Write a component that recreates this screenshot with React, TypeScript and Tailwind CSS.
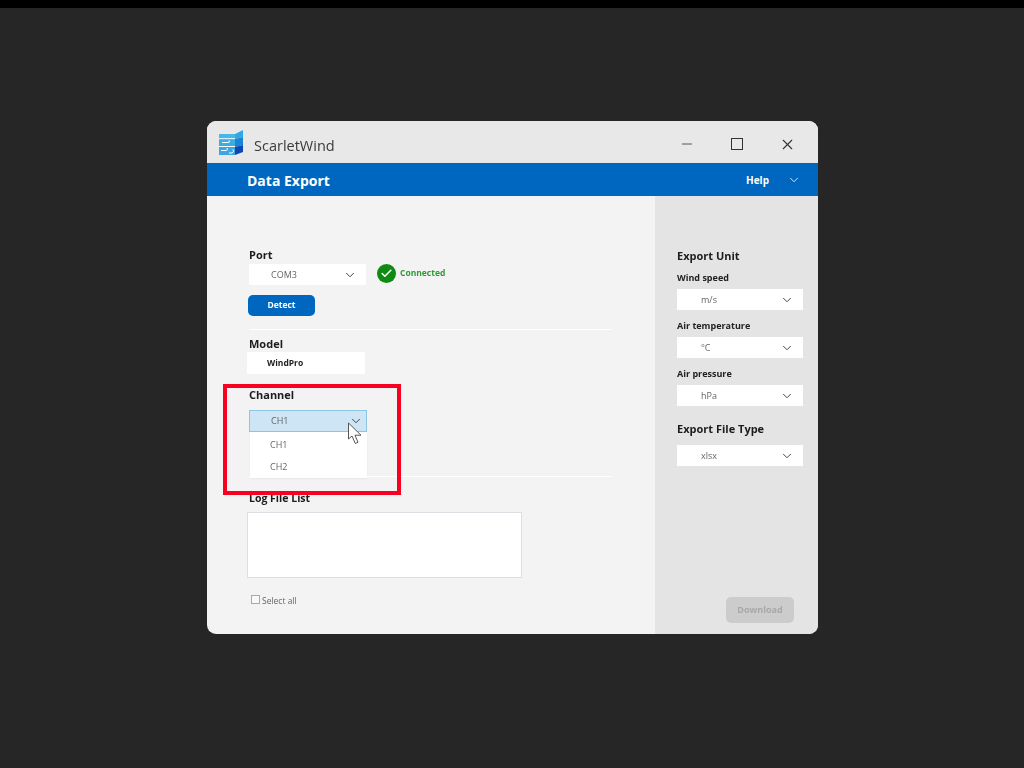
import { Check, ChevronDown, Minus, X } from 'lucide-react';

function Select({ value, className = 'w-[126px]', text = 'pl-[24px]' }: { value: string; className?: string; text?: string }) {
  return (
    <div className={`h-[21px] bg-white flex items-center justify-between pr-[9px] ${text} ${className}`}>
      <span className="text-[9px] text-[#666] pt-px">{value}</span>
      <ChevronDown className="w-[14px] h-[14px] text-[#444]" strokeWidth={1.7} />
    </div>
  );
}

function Logo() {
  return (
    <svg width="25" height="26" viewBox="0 0 25 26" className="shrink-0">
      <path d="M0 5 L16 5 L16 9.5 L0 9.5 Z" fill="#45b7ea" />
      <path d="M0 10 L16 10 L16 17 L0 17 Z" fill="#38ade6" />
      <path d="M0 18 L16 18 L16 26 L0 26 Z" fill="#3ba6e4" />
      <path d="M16 5 L24 1 L24 8 L16 10 Z" fill="#2fa8e6" />
      <path d="M16 10 L24 8 L24 16 L16 18 Z" fill="#1c84d6" />
      <path d="M16 18 L24 16 L24 23 L16 26 Z" fill="#0a48b4" />
      <path d="M3 13.5 H9 Q11.5 13.5 10 11.5 M2 21.5 H7 Q9.5 21 8 19 M10 24 H13 Q15.5 23 14 20.5" stroke="#ffffff" strokeWidth="1" fill="none" />
      <path d="M0 17.5 H16 M0 9.7 H16" stroke="#ffffff" strokeWidth="0.8" />
    </svg>
  );
}

function Cursor() {
  return (
    <svg width="16" height="23" viewBox="0 0 16 23" className="absolute left-[347px] top-[422px]">
      <path d="M1.5 1 L1.5 17 L5 14 L8.3 21.5 L11 20.3 L8 13.2 L14 13.2 Z" fill="#ffffff" stroke="#555555" strokeWidth="1" strokeLinejoin="round" />
    </svg>
  );
}

export default function App() {
  return (
    <div className="relative h-[768px] w-[1024px] overflow-hidden bg-[#262626] font-['Open_Sans','Noto_Sans',sans-serif]">
      <div className="h-2 bg-black" />
      <div className="ml-[207px] mt-[113px] w-[611px] h-[513px] rounded-[9px] overflow-hidden flex flex-col bg-[#f3f3f3] blur-[0.4px]">
        {/* title bar */}
        <div className="h-[42px] bg-[#e8e8e8] flex items-center pl-[12px]">
          <Logo />
          <span className="ml-[10px] mt-[7px] text-[14.5px] text-[#3a3a3a]">ScarletWind</span>
          <div className="ml-auto mt-[4px] flex items-center pr-[22px] text-[#333]">
            <Minus className="w-[16px] h-[16px]" strokeWidth={1.2} />
            <div className="ml-[36px] w-[12px] h-[12px] border-[1.5px] border-[#333]" />
            <X className="ml-[36px] w-[17px] h-[17px]" strokeWidth={1.5} />
          </div>
        </div>
        {/* blue header */}
        <div className="h-[33px] bg-[#0067c0] flex items-center pl-10 pr-[17px] text-white">
          <span className="mt-[2px] text-[14px] font-bold">Data Export</span>
          <span className="ml-auto mt-px text-[10px] font-bold">Help</span>
          <ChevronDown className="ml-[18px] w-[14px] h-[14px] text-[#cfe4f7]" strokeWidth={1.7} />
        </div>
        <div className="flex flex-1">
          {/* left form */}
          <div className="flex-1 pt-[51px] pl-[42px] pr-[43px]">
            <div className="text-[11px] font-bold text-[#1c1c1c] leading-[16px]">Port</div>
            <div className="flex items-center mt-px">
              <Select value="COM3" className="w-[117px]" text="pl-[22px]" />
              <div className="ml-[11px] -mt-[3px] w-[19px] h-[19px] rounded-full bg-[#0f8a12] flex items-center justify-center">
                <Check className="w-[13px] h-[13px] text-white" strokeWidth={3} />
              </div>
              <span className="ml-[4px] -mt-[3px] text-[8.5px] font-bold text-[#2f9a34]">Connected</span>
            </div>
            <div className="mt-[10px] -ml-px w-[67px] h-[21px] rounded-[5px] bg-[#0067c0] flex items-center justify-center text-[8.5px] font-bold text-white">Detect</div>
            <div className="mt-[13px] h-px bg-white" />
            <div className="mt-[6px] text-[11px] font-bold text-[#1c1c1c] leading-[16px]">Model</div>
            <div className="-ml-[2px] w-[118px] h-[22px] bg-white flex items-center pl-[20px] pt-px text-[8.5px] font-bold text-[#222]">WindPro</div>
            <div className="mt-[13px] text-[11px] font-bold text-[#1c1c1c] leading-[16px]">Channel</div>
            <div className="mt-[7px] w-[118px] h-[22px] bg-[#cde5f4] border border-[#8cc4e4] flex items-center justify-between pl-[21px] pr-[3px]">
              <span className="text-[9px] text-[#666]">CH1</span>
              <ChevronDown className="w-[14px] h-[14px] text-[#444]" strokeWidth={1.7} />
            </div>
            <div className="ml-px w-[117px] h-[46px] bg-white shadow-[0_1px_2px_rgba(0,0,0,0.05)] pt-[2px] pl-[20px] text-[9px] text-[#666]">
              <div className="h-[22px] leading-[22px]">CH1</div>
              <div className="h-[22px] leading-[22px]">CH2</div>
            </div>
            <div className="-mt-[2px] h-px bg-white" />
            <div className="mt-[13px] text-[10.5px] font-bold text-[#1c1c1c] leading-[16px]">Log File List</div>
            <div className="w-[275px] h-[66px] mt-[6px] -ml-[2px] bg-white border border-[#dcdfe3]" />
            <div className="mt-[17px] flex items-center text-[8.5px] text-[#666]">
              <div className="ml-[2px] w-[9px] h-[9px] -mt-[3px] border border-[#aaa] bg-[#f8f8f8]" />
              <span className="ml-[2px]">Select all</span>
            </div>
          </div>
          {/* right panel */}
          <div className="w-[163px] bg-[#e4e4e4] pt-[50px] pl-[22px] pr-[15px]">
            <div className="text-[11px] font-bold text-[#1c1c1c] leading-[20px]">Export Unit</div>
            <div className="mt-[5px] text-[9px] font-bold text-[#222] leading-[14px]">Wind speed</div>
            <Select value="m/s" className="mt-[4px]" />
            <div className="mt-[9px] text-[9px] font-bold text-[#222] leading-[14px]">Air temperature</div>
            <Select value="°C" className="mt-[4px]" />
            <div className="mt-[9px] text-[9px] font-bold text-[#222] leading-[14px]">Air pressure</div>
            <Select value="hPa" className="mt-[4px]" />
            <div className="mt-[13px] text-[11px] font-bold text-[#1c1c1c] leading-[20px]">Export File Type</div>
            <Select value="xlsx" className="mt-[6px]" />
            <div className="mt-[131px] ml-[49px] w-[68px] h-[26px] rounded-[5px] bg-[#cccccc] flex items-center justify-center text-[9px] font-bold text-[#a8a8a8]">Download</div>
          </div>
        </div>
      </div>
      {/* annotation over the screenshot */}
      <div className="absolute left-[223px] top-[384px] w-[178px] h-[111px] border-[4px] border-[#f80020]" />
      <Cursor />
    </div>
  );
}
